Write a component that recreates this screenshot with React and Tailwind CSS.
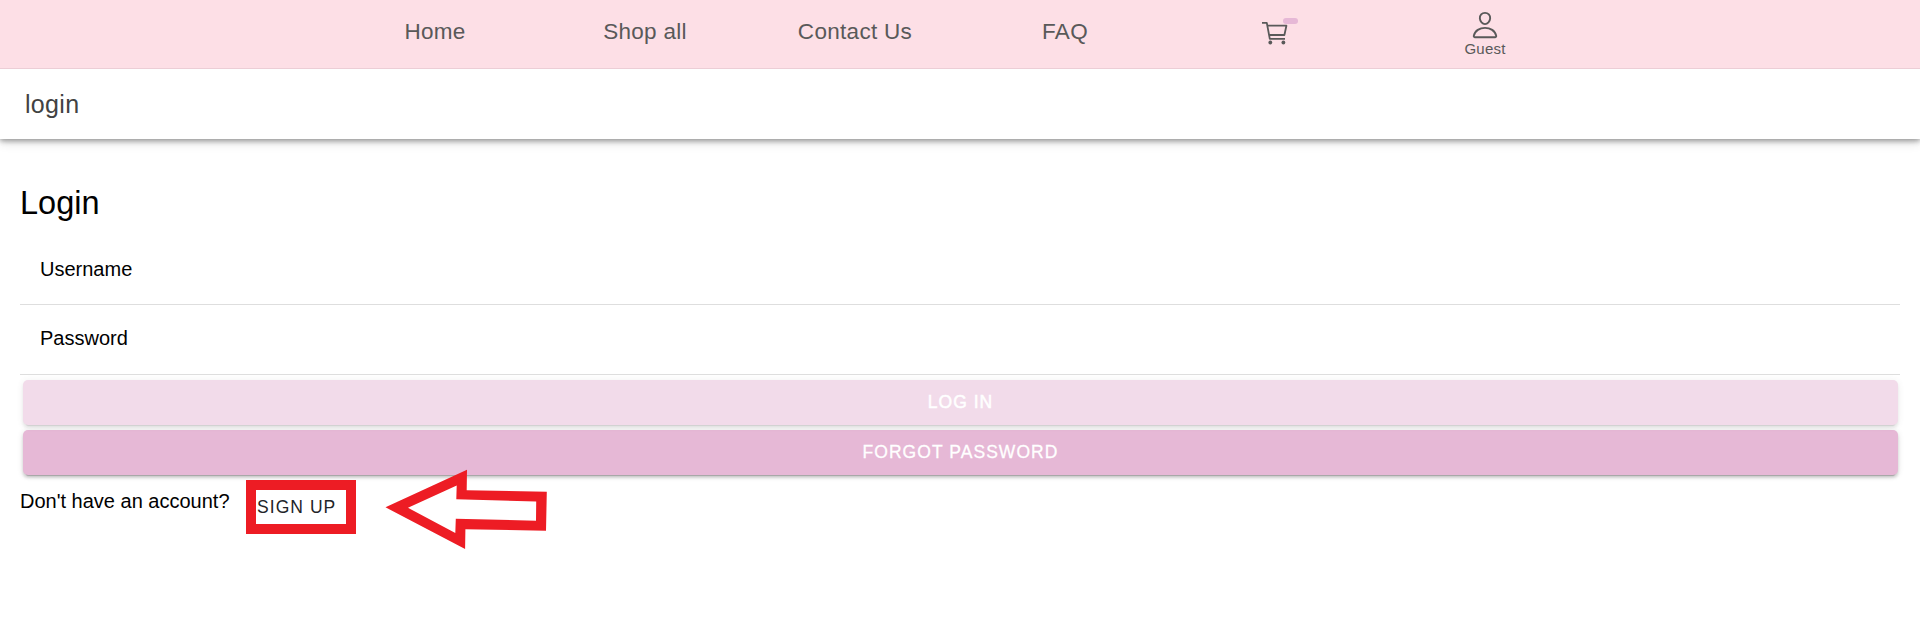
import React from "react";
import { IoPersonOutline } from "react-icons/io5";

const links = ["Home", "Shop all", "Contact Us", "FAQ"];

function CartIcon() {
  return (
    <svg width="30" height="30" viewBox="0 0 30 30" fill="none" stroke="currentColor" strokeWidth="1.8" strokeLinejoin="round">
      <path d="M2 4.8h4.8l3 16H25" />
      <path d="M7.4 7.7h19l-2 9.3H9.2" />
      <circle cx="10.3" cy="24.5" r="1.9" fill="currentColor" stroke="none" />
      <circle cx="23.4" cy="24.5" r="1.9" fill="currentColor" stroke="none" />
    </svg>
  );
}

function Field({ label, className }) {
  return (
    <label className={`flex h-[70px] items-center border-b border-[#dedede] pl-5 text-[20px] leading-6 ${className}`}>
      {label}
    </label>
  );
}

export default function App() {
  return (
    <div className="min-h-[636px] overflow-hidden bg-white font-['Liberation_Sans',Arial,sans-serif] text-black">
      <nav className="relative z-10 flex h-[69px] justify-center border-b border-[#ecced6] bg-[#fddfe6] text-[#595959]">
        {links.map((l) => (
          <a key={l} className="flex w-[210px] items-center justify-center pb-1 text-[22.5px] tracking-[0.0134em]">
            {l}
          </a>
        ))}
        <a className="flex w-[210px] justify-center pt-[18px]">
          <span className="relative h-[30px] w-[30px]">
            <CartIcon />
            <span className="absolute left-[23px] top-0 h-[6px] w-[15px] rounded-full bg-[#e6b8d6]" />
          </span>
        </a>
        <a className="flex w-[210px] flex-col items-center pt-[10px]">
          <IoPersonOutline size={30} />
          <span className="text-[15px] leading-[18px] tracking-[0.0134em]">Guest</span>
        </a>
      </nav>

      <header className="flex h-[70px] items-center pl-[25px] pt-px text-[25px] tracking-[0.0125em] text-[#424242] shadow-[0_2px_5px_rgba(0,0,0,0.25),0_4px_10px_rgba(0,0,0,0.12),0_1px_6px_rgba(0,0,0,0.15)]">
        login
      </header>

      <main className="px-5 pt-11">
        <h1 className="h-[52px] text-[32.5px] leading-[40px]">Login</h1>
        <Field label="Username" className="pb-px" />
        <Field label="Password" className="pb-[3px]" />
        <div className="flex flex-col gap-[5px] pl-[3px] pr-[2px] pt-[5px] text-[17.5px] tracking-[0.06em] text-white">
          <button className="h-[45px] rounded-[5px] bg-[#e6b8d6] opacity-50 [-webkit-text-stroke:0.5px_white] shadow-[0_4px_1px_-3px_rgba(0,0,0,0.2),0_3px_3px_0_rgba(0,0,0,0.14),0_1px_6px_0_rgba(0,0,0,0.12)]">
            LOG IN
          </button>
          <button className="h-[45px] rounded-[5px] bg-[#e6b8d6] [-webkit-text-stroke:0.3px_white] shadow-[0_4px_1px_-3px_rgba(0,0,0,0.2),0_3px_3px_0_rgba(0,0,0,0.14),0_1px_6px_0_rgba(0,0,0,0.12)]">
            FORGOT PASSWORD
          </button>
        </div>
        <div className="flex items-start">
          <span className="w-[226px] pt-[14px] text-[20px] leading-6">Don't have an account?</span>
          <button className="mt-[5px] h-[54px] w-[110px] border-[10px] border-[#ed1c24] pl-[1px] text-left text-[17.5px] leading-[34px] tracking-[0.06em] text-[#222428]">
            SIGN UP
          </button>
          <svg className="relative -mt-[6px] ml-[29px]" width="164" height="81" viewBox="385 469 164 81" fill="#ed1c24" fillRule="evenodd">
            <path d="M385.5 507.3 467 469.7l-.3 20.6 80.1 1.5-.8 38.9-80.6-1.4-.3 19.6ZM408 507.8 455.3 533l.5-14.2 80.2 1.9.2-19.1-79.9-2.3.4-13.8Z" />
          </svg>
        </div>
      </main>
    </div>
  );
}
